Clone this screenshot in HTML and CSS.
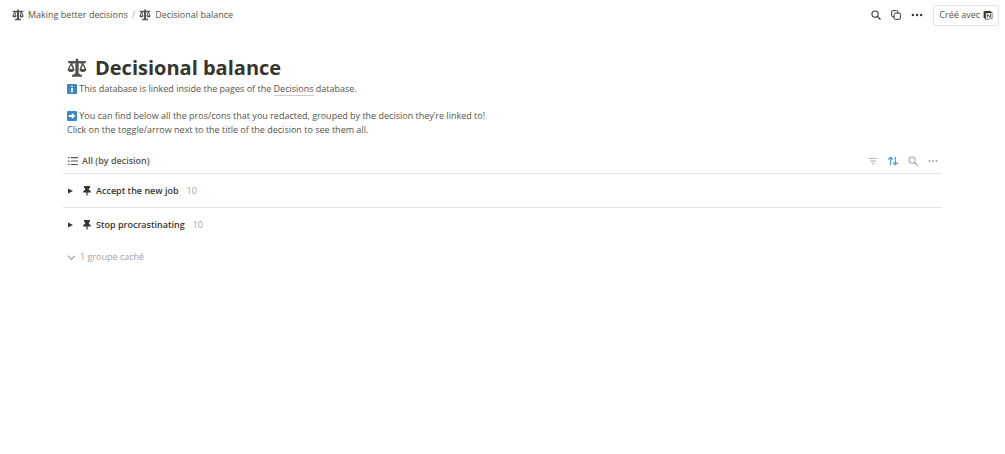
FILE: index.html
```
<!DOCTYPE html>
<html lang="fr">
<head>
    <meta charset="UTF-8">
    <title>Decisional balance</title>
    <link rel="stylesheet" href="styles.css">
</head>
<body>
    <!-- shared icons -->
    <svg class="sprite">
        <symbol id="scale" viewBox="0 0 24 24">
            <path d="M10.400 2.200a1.600 1.600 0 0 1 3.200 0V3.600h9v2.600h-3l3.600 7.300c0 2.200-1.800 3.400-4.100 3.400s-4.100-1.200-4.100-3.400L17.700 6.800l-3.700-.4v12.400h1.700v1.400h2.300V22.500H6v-2.300h2.300v-1.400H10V6.400l-3.700.4 2.700 6.700c0 2.200-1.800 3.400-4.100 3.400S.8 15.700.8 13.500l3.600-7.300h-3V3.600h9zM4.900 8.800l-2 4.400h4zM19.100 8.800l-2 4.400h4z"/>
        </symbol>
        <symbol id="search" viewBox="0 0 16 16">
            <circle class="line" cx="6.500" cy="6.500" r="5" stroke-width="1.700"/>
            <path class="line" d="M10.200 10.200l4.500 4.500" stroke-width="2" stroke-linecap="round"/>
        </symbol>
        <symbol id="dots" viewBox="0 0 16 16">
            <circle cx="2.500" cy="8" r="1.600"/>
            <circle cx="8" cy="8" r="1.600"/>
            <circle cx="13.500" cy="8" r="1.600"/>
        </symbol>
        <symbol id="pin" viewBox="0 0 16 16">
            <path d="M3.200 0h9.600v2.600l-1.600.8v3c1.800.6 3 1.800 3 3.800H9V14l-1 2-1-2v-3.800H1.800c0-2 1.200-3.200 3-3.800v-3l-1.600-.8z"/>
        </symbol>
    </svg>

    <header class="topbar">
        <nav class="crumbs">
            <a href="#"><svg class="icon-m"><use href="#scale"/></svg>Making better decisions</a>
            <span class="slash">/</span>
            <a href="#"><svg class="icon-m"><use href="#scale"/></svg>Decisional balance</a>
        </nav>
        <div class="actions">
            <button aria-label="Rechercher"><svg class="icon-s"><use href="#search"/></svg></button>
            <button aria-label="Dupliquer">
                <svg class="icon-s line" viewBox="0 0 16 16" stroke-width="1.600">
                    <rect x="5" y="5" width="10" height="10" rx="2"/>
                    <path d="M11 5V3a2 2 0 0 0-2-2H3A2 2 0 0 0 1 3v6a2 2 0 0 0 2 2h2"/>
                </svg>
            </button>
            <button aria-label="Plus"><svg class="icon-m"><use href="#dots"/></svg></button>
            <button class="made-with">Créé avec
                <svg class="icon-s" viewBox="0 0 16 16">
                    <path d="M1 2l9.500-1L15 4v10.500L4.500 15.500 1 12z" fill="#37352f"/>
                    <path d="M4.500 5.200L14 4.600v8.900l-9.500.7z" fill="#fff"/>
                    <path class="line" d="M6.800 12.500V6.800l5 5V6" stroke-width="1.600"/>
                </svg>
            </button>
        </div>
    </header>

    <main class="page">
        <h1><svg class="icon-l"><use href="#scale"/></svg>Decisional balance</h1>
        <div class="intro">
            <p>
                <svg class="emoji" viewBox="0 0 10 10"><rect width="10" height="10" rx="1" fill="#3b88c3"/><path d="M4.200 1.700h1.600v1.400H4.200zM4.200 4h1.600v4.200H4.200z" fill="#fff"/></svg>
                This database is linked inside the pages of the <a href="#">Decisions</a> database.
            </p>
            <p>
                <svg class="emoji" viewBox="0 0 10 10"><rect width="10" height="10" rx="1" fill="#3b88c3"/><path d="M1.800 4h3V2l3.600 3-3.600 3V6h-3z" fill="#fff"/></svg>
                You can find below all the pros/cons that you redacted, grouped by the decision they’re linked to!<br>
                Click on the toggle/arrow next to the title of the decision to see them all.
            </p>
        </div>

        <section>
            <div class="toolbar">
                <button class="view">
                    <svg class="icon-s" viewBox="0 0 16 16">
                        <path d="M0 1.500h2.500v2H0zM0 7h2.500v2H0zM0 12.500h2.500v2H0zM4.500 1.700H16v1.700H4.500zM4.500 7.200H16v1.700H4.500zM4.500 12.700H16v1.700H4.500z"/>
                    </svg>All (by decision)
                </button>
                <div class="tools">
                    <button aria-label="Filtrer"><svg class="icon-s" viewBox="0 0 16 16"><path d="M1 3h14v1.500H1zM3.800 7.200h8.400v1.500H3.800zM6 11.500h4V13H6z"/></svg></button>
                    <button class="on" aria-label="Trier">
                        <svg class="icon-s line" viewBox="0 0 16 16" stroke-width="1.800" stroke-linecap="round" stroke-linejoin="round">
                            <path d="M4.200 14V2M1 5.200L4.200 2l3.200 3.200M11.800 2v12M8.600 10.800l3.200 3.200 3.200-3.200"/>
                        </svg>
                    </button>
                    <button aria-label="Rechercher"><svg class="icon-s"><use href="#search"/></svg></button>
                    <button aria-label="Plus"><svg class="icon-s"><use href="#dots"/></svg></button>
                </div>
            </div>
            <div class="group">
                <button class="toggle" aria-label="Ouvrir"><svg viewBox="0 0 6 6"><path d="M0 0l6 3-6 3z"/></svg></button>
                <svg class="icon-s"><use href="#pin"/></svg>
                <a href="#">Accept the new job</a>
                <span class="count">10</span>
            </div>
            <div class="group">
                <button class="toggle" aria-label="Ouvrir"><svg viewBox="0 0 6 6"><path d="M0 0l6 3-6 3z"/></svg></button>
                <svg class="icon-s"><use href="#pin"/></svg>
                <a href="#">Stop procrastinating</a>
                <span class="count">10</span>
            </div>
            <button class="hidden-groups">
                <svg class="line" viewBox="0 0 10 10" stroke-width="1.300"><path d="M1 3l4 4 4-4"/></svg>1 groupe caché
            </button>
        </section>
    </main>
</body>
</html>
```
FILE: styles.css
```
*{
    margin: 0;
    padding: 0;
    box-sizing: border-box;
}
body{
    font: 9px/14px "Open Sans", "Noto Sans", sans-serif;
    color: #55534e;
    background: #fff;
}
a{
    color: inherit;
    text-decoration: none;
}
button{
    display: flex;
    align-items: center;
    font: inherit;
    color: inherit;
    background: none;
    border: 0;
    cursor: pointer;
}
svg{
    flex: none;
    fill: currentColor;
}
.line{
    fill: none;
    stroke: currentColor;
}
.sprite{
    display: none;
}
.icon-s{
    width: 10px;
    height: 10px;
}
.icon-m{
    width: 12px;
    height: 12px;
}
.icon-l{
    width: 20px;
    height: 20px;
}

/* top bar */
.topbar{
    display: flex;
    align-items: center;
    justify-content: space-between;
    height: 30px;
    padding: 0 6px 0 12px;
}
.crumbs, .crumbs a, .actions, .tools{
    display: flex;
    align-items: center;
}
.crumbs{
    gap: 4px;
}
.crumbs a{
    gap: 4px;
}
.slash{
    color: #a5a39f;
}
.actions{
    gap: 10px;
    color: #37352f;
}
.made-with{
    gap: 3px;
    height: 21px;
    padding: 0 5px;
    color: #55534e;
    border: 1px solid #e3e2e0;
    border-radius: 2px;
}

/* page */
.page{
    padding: 24px 63px 0;
}
h1{
    display: flex;
    align-items: center;
    gap: 8px;
    padding-left: 4px;
    font-size: 20px;
    line-height: 28px;
    font-weight: 700;
    color: #37352f;
}
h1 svg{
    color: #55534e;
}
.intro{
    padding: 0 4px 11px;
}
.intro p + p{
    margin-top: 13px;
}
.intro a{
    border-bottom: 1px solid #cfcdc9;
}
.emoji{
    width: 10px;
    height: 10px;
    vertical-align: -2px;
}

/* database */
.toolbar{
    display: flex;
    align-items: center;
    justify-content: space-between;
    height: 26px;
    padding: 0 4px 0 5px;
    border-bottom: 1px solid #e3e2e0;
}
.view{
    gap: 4px;
    font-weight: 600;
}
.tools{
    gap: 10px;
    color: #a5a39f;
}
.on{
    color: #4a98e8;
}
.group{
    display: flex;
    align-items: center;
    height: 33px;
    padding-left: 5px;
    color: #37352f;
}
.group + .group{
    height: 34px;
    border-top: 1px solid #e3e2e0;
}
.toggle{
    margin-right: 9px;
}
.toggle svg{
    width: 5px;
    height: 6px;
}
.group a{
    margin: 0 8px 0 4px;
    font-weight: 600;
}
.count{
    color: #a5a39f;
}
.hidden-groups{
    gap: 4px;
    margin-top: 9px;
    padding-left: 4px;
    color: #a5a39f;
}
.hidden-groups svg{
    width: 9px;
    height: 9px;
}
```
